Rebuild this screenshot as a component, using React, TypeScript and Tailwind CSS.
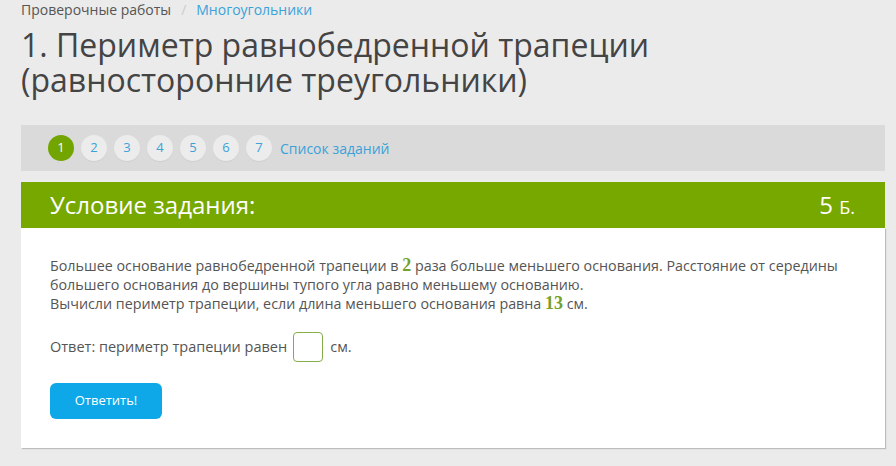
import React from "react";

export default function App() {
  const pages = [1, 2, 3, 4, 5, 6, 7];
  const serif = { fontFamily: '"Liberation Serif", "DejaVu Serif", serif' };
  return (
    <div className="w-[896px] h-[466px] bg-[#ebebeb] overflow-hidden" style={{ fontFamily: '"Open Sans", "Noto Sans", sans-serif' }}>
      <div className="ml-[21px] w-[864px]">
        <div className="h-[20px] flex items-center text-[14px] leading-[20px]">
          <span className="text-[#555]">Проверочные работы</span>
          <span className="text-[#ccc] mx-[10px]">/</span>
          <span className="text-[#3aa2d9]">Многоугольники</span>
        </div>
        <h1 className="mt-[7px] text-[32px] leading-[35px] text-[#444] font-normal">
          1. Периметр равнобедренной трапеции
          <br />
          (равносторонние треугольники)
        </h1>
        <div className="mt-[28px] h-[46px] bg-[#dadada] flex items-center pl-[27px] gap-[7px]">
          {pages.map((p) =>
            p === 1 ? (
              <div key={p} className="w-[26px] h-[26px] rounded-full bg-[#72a500] text-white text-[13px] flex items-center justify-center">
                {p}
              </div>
            ) : (
              <div key={p} className="w-[26px] h-[26px] rounded-full bg-[#ececec] text-[#3aa2d9] text-[13px] flex items-center justify-center shadow-[0_1px_1px_rgba(0,0,0,0.05)]">
                {p}
              </div>
            )
          )}
          <span className="ml-[1px] text-[14px] text-[#3aa2d9]">Список заданий</span>
        </div>
        <div className="mt-[11px] h-[46px] bg-[#77a800] flex items-center justify-between pl-[29px] pr-[30px] text-white">
          <span className="text-[24px]">Условие задания:</span>
          <span className="text-[24px]">
            5 <span className="text-[18px]">Б.</span>
          </span>
        </div>
        <div className="bg-white h-[220px] pl-[29px] pt-[28px] shadow-[1px_1px_1px_rgba(0,0,0,0.2)]">
          <p className="text-[14.3px] leading-[19px] text-[#555] whitespace-nowrap">
            Большее основание равнобедренной трапеции в{" "}
            <span className="text-[#74a02c] text-[18px] font-bold" style={serif}>2</span>{" "}
            раза больше меньшего основания. Расстояние от середины
            <br />
            большего основания до вершины тупого угла равно меньшему основанию.
            <br />
            Вычисли периметр трапеции, если длина меньшего основания равна{" "}
            <span className="text-[#74a02c] text-[18px] font-bold" style={serif}>13</span>{" "}
            см.
          </p>
          <div className="mt-[19px] flex items-center text-[14.5px] text-[#555]">
            <span>Ответ: периметр трапеции равен</span>
            <div className="ml-[6px] w-[30px] h-[30px] rounded-[4px] border border-[#86ad48] bg-white" />
            <span className="ml-[7px]">см.</span>
          </div>
          <button className="mt-[21px] w-[112px] h-[36px] rounded-[6px] bg-[#0ea8e8] text-white text-[13px]">
            Ответить!
          </button>
        </div>
      </div>
    </div>
  );
}
